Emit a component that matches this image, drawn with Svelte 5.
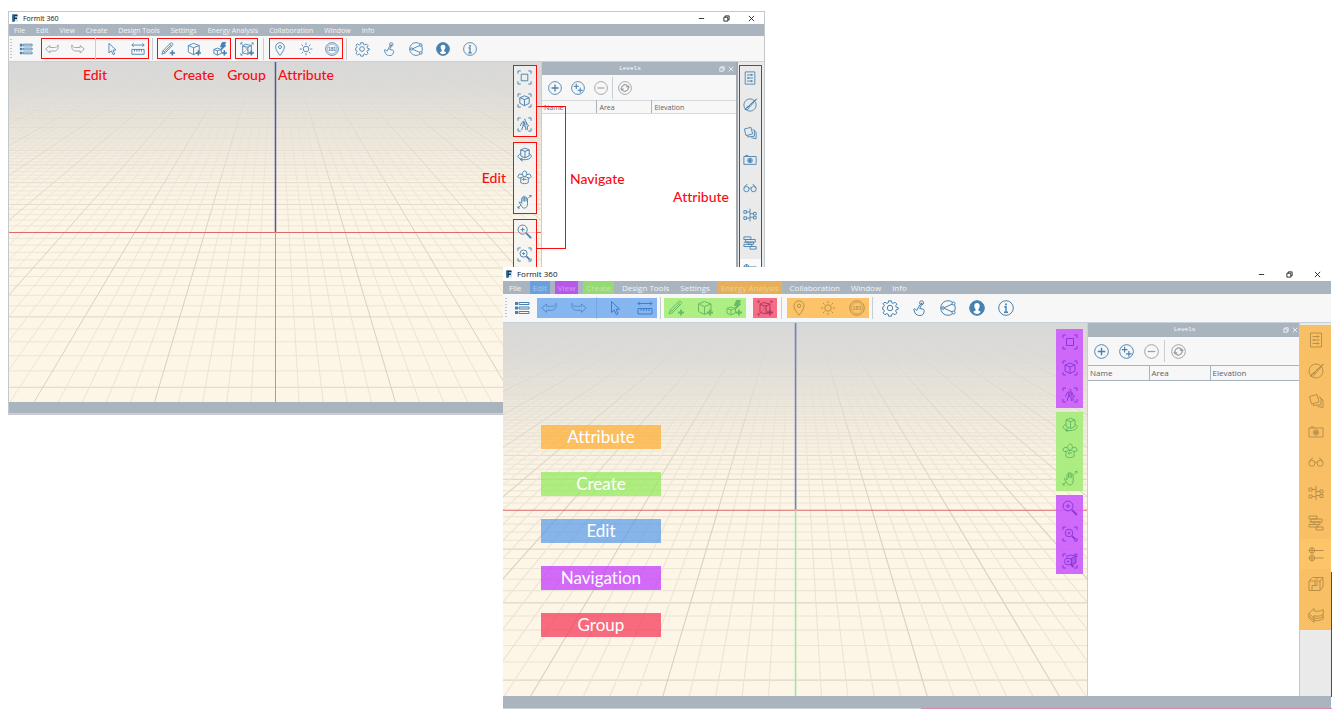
<script>
  const P = (d, extra = '') => `<path d="${d}" ${extra}/>`;
  const corners = P('M1 4V1h3M12 1h3v3M15 12v3h-3M4 15H1v-3');
  const plus = P('M13 9.500v6M10 12.500h6', 'stroke-width="1.800"');
  const hand = 'M5 13 2.500 9.500c-.6-1 .7-1.500 1.300-.7L5 10V4.500c0-1 1.500-1 1.500 0V3c0-1 1.600-1 1.600 0v.8c0-1 1.600-1 1.600 0V5c0-1 1.500-1 1.500 0v5c0 3-1.200 5-3.200 5S5.600 14.300 5 13zM6.500 4.500V8M8.100 3.800V8M9.700 5v3';

  const icons = {
    list: P('M1 3.500h3M1 8h3M1 12.500h3', 'stroke-width="3"') + P('M5 2.500h10v2H5zM5 7h10v2H5zM5 11.500h10v2H5z'),
    undo: P('M.8 8 5.500 4v2.300h5c2.300 0 3.900-.8 4.400-3 .8 3.800-.6 7-4.400 7h-5v2.200z'),
    redo: P('M15.200 8 10.500 4v2.300h-5c-2.300 0-3.900-.8-4.400-3-.8 3.800.6 7 4.400 7h5v2.200z'),
    cursor: P('M4.500 1.500v11l2.800-2.400 2 4.400 1.800-.8-2-4.300 3.400-.3z'),
    measure: P('M1 3.500h14M3 1.500l-2 2 2 2M13 1.500l2 2-2 2M1 8.500h14v5.500H1zM4 8.500v2.500M6.700 8.500v2.500M9.300 8.500v2.500M12 8.500v2.500'),
    pencil: P('M1 14l1.200-4L11 1.200c1-1 3.300 1 2.300 2.300L4.800 12.500zM2.200 10l2.600 2.500M9.800 2.400l2.400 2.400M3.800 11.200 11.200 3.800') + plus,
    cube: P('M1.500 4 7.500 1.500 14 4v7.500L7.500 14.500l-6-3zM1.500 4l6 2.500L14 4M7.500 6.500v8') + plus,
    bolt: P('M1 8.500 5 7l4.500 1.500V13L5 15l-4-2zM1 8.500 5 10l4.500-1.500M5 10v5') + P('M10.500.5h4L12.800 4h2L9 9.500l1.600-4H8.500z', 'fill="currentColor"') + plus,
    group: P('M1 3V1h2M13 1h2v2M3 15H1v-2M3 4.500l3-2 7 1.500v7l-4 3-6-1.500zM3 4.500l6 1.500 4-2M9 6v8') + P('M1 1l12 13M15 1 1 15', 'stroke-width=".5"') + plus,
    pin: P('M8 15.300C5 11.500 3 8.500 3 5.800a5 5 0 0 1 10 0c0 2.700-2 5.700-5 9.500z') + '<circle cx="8" cy="5.800" r="1.700"/>',
    sun: '<circle cx="8" cy="8" r="3.200"/>' + P('M8 .8v2.400M8 12.800v2.400M.8 8h2.400M12.800 8h2.400M3 3l1.600 1.600M11.400 11.400 13 13M13 3l-1.600 1.600M4.600 11.400 3 13'),
    dial: '<circle cx="8" cy="8" r="7.300"/><circle cx="8" cy="8" r="5.600" stroke-width=".6"/><text x="8" y="10" font-size="5.500" font-family="Liberation Sans, sans-serif" font-weight="700" text-anchor="middle" fill="currentColor" stroke="none">181</text>',
    gear: '<circle cx="8" cy="8" r="2.700"/>' + P('M6.600.8h2.800l.4 2 1.400.6 1.800-1.200 1.900 1.900-1.200 1.800.5 1.300 2 .4v1.600l-2 .5-.5 1.400 1.200 1.800-1.900 1.900-1.800-1.200-1.400.6-.4 2H6.600l-.4-2-1.400-.6L3 14.800l-1.900-1.900 1.200-1.800-.6-1.400-1-.3V7.100l1.100-.4.5-1.300-1.200-1.800L3 2.200l1.800 1.200 1.400-.6z'),
    touch: P('M4 13 2.800 9.500c0-1 1.200-1.200 1.700-.3l1.200 1.300 3-5.500c.7-1 1.900-.3 1.400.8L8.700 8.500l3.300.7c1 .2 1.300 1 1.200 2-.2 2.600-1.500 4.300-4.200 4.300-2.300 0-4-.9-5-2.500z') + '<circle cx="10.600" cy="2.800" r="2"/>' + P('M10.600 2.800v1.500', 'stroke-width="1.800"'),
    share: '<circle cx="8" cy="8" r="7.300"/>' + P('M13.500 3.500 3.500 8l10 4.500') + '<circle cx="3" cy="8" r="1.300" fill="#f7f7f7"/><circle cx="13.500" cy="3.500" r="1.500" fill="#f7f7f7"/><circle cx="13.500" cy="12.500" r="1.500" fill="#f7f7f7"/>',
    user: '<circle cx="8" cy="8" r="7.300" fill="currentColor"/>' + P('M8 3c-2 0-2.900 1.500-2.700 3.300.2 1.500.8 2.300 1.300 2.900v1.300l-2.300 1.300C5 13.400 6.500 14 8 14s3-.6 3.700-2.200l-2.300-1.300V9.200c.5-.6 1.100-1.400 1.300-2.900C10.900 4.500 10 3 8 3z', 'fill="#fff" stroke="none"'),
    info: '<circle cx="8" cy="8" r="7.300"/>' + P('M8 3.500v1.800', 'stroke-width="1.800"') + P('M6.300 6.800H8v5.300M6 12.300h4', 'stroke-width="1.400"'),
    frame: corners + P('M4.500 4.500h7v7h-7z'),
    frameCube: corners + P('M3 5 8 3l5 2v6L8 13.500 3 11zM3 5l5 2 5-2M8 7v6.500'),
    walk: corners + P('M7.500 2.500c1.500-.8 2 1 1 1.800l1.500 1.200 1 3 2 1M7 4.500 5 6 3.500 9.500M7 4.500 6.500 9 5 14M6.500 9l2.500 1 .5 4M10 5.500 9.500 9M8.500 4.500 7.500 9.500M11 9.500V14'),
    orbit: P('M4 3 8.500 1.200 13 3v6.500L8.500 11.500 4 9.500zM4 3l4.500 1.700L13 3M8.500 4.700v6.800M4 7c-4 2-4 5 1 5.800M13 7c4 2 2.500 6-4 6.500H4M6 11.500l-2.500 1.800L6 15'),
    look: P('M4 8v5.500c2.500 1.500 6 1.500 8 0V8M4 8.500C2.500 8.800 1.200 8.300.8 7l1.700-2.800L6 5M12 8.500c1.500.3 2.800-.2 3.200-1.500l-1.700-2.800L10 5M5.500 5C5.500 3 6.500 1.500 8 1s2.500 2 2.500 4L8 7.500zM4 8.500c2-1.800 6-1.800 8 0M10 10H6M7.500 8.500 6 10l1.500 1.500'),
    pan: P(hand) + P('M12 4.500 15 1.500M13 1.500h2v2M4 12l-3 3M1 13v2h2'),
    zoom: '<circle cx="6" cy="6" r="4.900"/>' + P('M6 3.800v4.400M3.800 6h4.400') + P('M9.800 9.800 15 15', 'stroke-width="1.900"'),
    zoomFrame: corners + '<circle cx="7" cy="7" r="3.800"/>' + P('M7 5.600v2.800M5.600 7h2.800') + P('m10 10 3.500 3.500', 'stroke-width="1.800"'),
    zoomCube: corners + P('M9.500 5 14 3v7l-4.500 2z', 'fill="currentColor" fill-opacity=".5"') + P('M4 3.500 9 2l5 1') + '<circle cx="6" cy="8.500" r="3.500"/>' + P('M6 7.300v2.400M4.800 8.500h2.400') + P('m8.500 11 3 3', 'stroke-width="1.800"'),
    sliders: P('M2.500 1h11v14h-11zM4.500 4.500h7M4.500 8h7M4.500 11.500h7M9.500 3.300v2.400M6 6.800v2.400M9.500 10.300v2.400'),
    brush: '<circle cx="8" cy="8" r="7"/>' + P('M15.500 1 8 7.500 6 10.500l2.500-1zM6 9.500c-2 0-2 2.500-4 3.500 3 .8 5-.5 5-2.300M13 3.300 3 12.800'),
    layers: P('M1.500 3.500 9 1.500l2 7.500-7.500 2zM11 4l2 .7 0 7-7.500.8v-1.500M13 6l2 1v7.500l-5.500-1'),
    camera: P('M1 4h14v9H1zM3 4V2.800h2.500V4') + '<circle cx="8" cy="8.500" r="2.700"/><circle cx="8" cy="8.500" r="1.500" fill="currentColor"/>',
    glasses: P('M1 8 3.500 4.500 5 4M15 8l-2.500-3.500L11 4M6.800 8.500c.7-.6 1.700-.6 2.400 0') + '<circle cx="3.900" cy="9.300" r="3"/><circle cx="12.100" cy="9.300" r="3"/>',
    tree: P('M8 .8v14.400M4 4.500h4M4 11.500h4M8 6.500h4M8 10.500h4M1 3h3v3H1zM1 10h3v3H1zM12 5h3v3h-3zM12 9.500h3v3h-3z'),
    bricks: P('M1 1h8v3H1zM3 4h11v3H3zM6 7h6v2.500H6zM1 9.500h9V12H1zM8 12h7v3H8zM1 7h5'),
    datum: '<circle cx="4" cy="4.500" r="2.700"/><circle cx="4" cy="12" r="2.700"/>' + P('M.5 4.500h15M.5 12h15M4 1v7M4 8.500v7'),
    section: P('M1 5 4.500 1.500h10.500V11L12 14.500H1zM1 5h6v4.500H4v5M7 5l3-3.500M12 14.500V5M12 5l3-3.500M9 5h3M9 5v4.500H7'),
    stack: P('M.8 6.500 6 1.500v2.300c3 1 6 .6 9.200-1.300v5C12 9.300 9 9.600 6 8.700V11zM.8 6.500v2.300L6 13.300V11M.8 8.800V11L6 15.500v-2.200M6 11c3 .8 6 .4 9.200-1.500V7.500M6 13.300c3 .8 6 .4 9.200-1.500V9.500'),
    add: '<circle cx="8" cy="8" r="7.300"/>' + P('M8 4v8M4 8h8', 'stroke-width="1.500"'),
    addMany: '<circle cx="8" cy="8" r="7.300"/>' + P('M6 3v6M3 6h6M10.500 7.500v6M7.500 10.500h6', 'stroke-width="1.200"'),
    remove: '<circle cx="8" cy="8" r="7.300"/>' + P('M4 8h8', 'stroke-width="1.300"'),
    refresh: '<circle cx="8" cy="8" r="7.300"/>' + P('M4.600 10A4 4 0 0 1 10.500 5M11.400 6A4 4 0 0 1 5.500 11M3 8.500l1.500 2 2-1.300M13 7.500l-1.500-2-2 1.300', 'stroke-width="1.300"'),
    min: P('M2 8h12', 'stroke-width="1.900"'),
    restore: P('M2 5h9v9H2zM5 5V2h9v9H11', 'stroke-width="1.900"'),
    close: P('M2 2l12 12M14 2 2 14', 'stroke-width="1.900"')
  };

  const menu = [
    ['File', ''], ['Edit', 'edit'], ['View', 'nav'], ['Create', 'create'], ['Design Tools', ''],
    ['Settings', ''], ['Energy Analysis', 'attr'], ['Collaboration', ''], ['Window', ''], ['Info', '']
  ];
  const tools = [
    { kind: 'edit', label: 'Edit', items: ['undo', 'redo', '|', 'cursor', 'measure'] },
    { kind: 'create', label: 'Create', rule: true, items: ['pencil', 'cube', 'bolt'] },
    { kind: 'group', label: 'Group', items: ['group'] },
    { kind: 'attr', label: 'Attribute', rule: true, items: ['pin', 'sun', 'dial'] }
  ];
  const extras = ['gear', 'touch', 'share', 'user', 'info'];
  const navGroups = [
    { kind: 'nav', items: ['frame', 'frameCube', 'walk'] },
    { kind: 'create', items: ['orbit', 'look', 'pan'] },
    { kind: 'nav', items: ['zoom', 'zoomFrame', 'zoomCube'] }
  ];
  const rail = ['sliders', 'brush', 'layers', 'camera', 'glasses', 'tree', 'bricks', 'datum', 'section', 'stack'];
  const legend = [['Attribute', 'attr'], ['Create', 'create'], ['Edit', 'edit'], ['Navigation', 'nav'], ['Group', 'group']];

  // Ground plane in one-point perspective: horizon above the view, origin at (266, 170).
  const horizon = -66;
  const depth = 37.8;
  const rows = [];
  for (let i = -90; i <= 17; i++) {
    if (i === 0) continue;
    rows.push({ y: horizon + (236 * depth) / (depth - i), major: i % 5 === 0 });
  }
  const cols = [];
  for (let i = -100; i <= 100; i++) {
    if (i === 0) continue;
    cols.push({ a: 266 + i * 14 * (66 / 236), b: 266 + i * 14 * (406 / 236), major: i % 5 === 0 });
  }
</script>

{#snippet icon(name)}
  <svg class="icon" viewBox="0 0 16 16" aria-hidden="true">{@html icons[name]}</svg>
{/snippet}

{#snippet tool(name)}
  <button class="tool" class:muted={name === 'undo' || name === 'redo'} aria-label={name}>{@render icon(name)}</button>
{/snippet}

{#snippet appWindow(front)}
  <section class="window" class:front class:back={!front}>
    <header class="title">
      <svg class="logo" viewBox="0 0 16 16" aria-hidden="true">
        <path d="M2 1h12v14H2z" fill="#c5e3f5" />
        <path d="M3 1h10v3.500H7.500V7H12v3H7.500v5H3z" fill="#0b3558" />
        <path d="M3 1h3v14H3z" fill="#1668a0" />
      </svg>
      <span>FormIt 360</span>
      <div class="controls">
        {#each ['min', 'restore', 'close'] as c}<button aria-label={c}>{@render icon(c)}</button>{/each}
      </div>
    </header>

    <nav class="menu">
      {#each menu as [text, kind]}<button class={['item', front && kind && `tint ${kind}`]}>{text}</button>{/each}
    </nav>

    <div class="toolbar">
      <span class="grip"></span>
      <div class="lead">{@render tool('list')}</div>
      {#each tools as g}
        {#if g.rule}<span class="rule"></span>{/if}
        <div class={['set', g.kind, front ? 'tint' : 'outlined']}>
          {#each g.items as name}
            {#if name === '|'}<span class="rule inner"></span>{:else}{@render tool(name)}{/if}
          {/each}
          {#if !front}<span class="note below">{g.label}</span>{/if}
        </div>
      {/each}
      <span class="rule"></span>
      <div class="extras">{#each extras as name}{@render tool(name)}{/each}</div>
    </div>

    <div class="body">
      <div class="view">
        <svg class="ground" viewBox="0 0 532 340" preserveAspectRatio="xMidYMin slice" aria-hidden="true">
          <defs>
            <linearGradient id={front ? 'hazeFront' : 'hazeBack'} x1="0" y1="0" x2="0" y2="1">
              <stop offset="0" stop-color="#d8d8d8" />
              <stop offset=".08" stop-color="#dbdad7" stop-opacity=".9" />
              <stop offset=".25" stop-color="#e6e1d8" stop-opacity=".5" />
              <stop offset=".5" stop-color="#fdf5e4" stop-opacity="0" />
            </linearGradient>
          </defs>
          <rect width="532" height="340" fill="#fdf5e5" />
          {#each rows as r}<line x1="0" x2="532" y1={r.y} y2={r.y} stroke={r.major ? '#ddd6c8' : '#ece6d8'} />{/each}
          {#each cols as c}<line x1={c.a} x2={c.b} y1="0" y2="340" stroke={c.major ? '#d8d1c3' : '#ebe4d6'} />{/each}
          <rect width="532" height="340" fill={front ? 'url(#hazeFront)' : 'url(#hazeBack)'} />
          <line x1="0" x2="532" y1="170.500" y2="170.500" stroke="#df6a6a" />
          <line x1="266.500" x2="266.500" y1="170" y2="340" stroke={front ? '#a9e2b0' : '#62c878'} stroke-width={front ? 1.5 : 1} />
          <line x1="266.500" x2="266.500" y1="0" y2="170" stroke={front ? '#7483b5' : '#5055a5'} stroke-width="1.500" />
        </svg>
        {#if front}
          <ul class="legend">
            {#each legend as [text, kind]}<li class="tint {kind}"><span>{text}</span></li>{/each}
          </ul>
        {/if}
        <div class="navbar">
          {#each navGroups as g}
            <div class={['navset', g.kind, front ? 'tint' : 'outlined']}>
              {#each g.items as name}{@render tool(name)}{/each}
              {#if !front && g.kind === 'create'}<span class="note before">Edit</span>{/if}
            </div>
          {/each}
          {#if !front}<div class="bracket"><span class="note after">Navigate</span></div>{/if}
        </div>
      </div>

      <aside class="levels">
        <div class="caption">
          <span>Levels</span>
          <button aria-label="float">{@render icon('restore')}</button>
          <button aria-label="hide">{@render icon('close')}</button>
        </div>
        <div class="actions">
          <button aria-label="add level">{@render icon('add')}</button>
          <button aria-label="add levels">{@render icon('addMany')}</button>
          <button class="muted" aria-label="remove level">{@render icon('remove')}</button>
          <span class="rule"></span>
          <button class="muted" aria-label="refresh">{@render icon('refresh')}</button>
        </div>
        <table>
          <thead><tr><th>Name</th><th>Area</th><th>Elevation</th></tr></thead>
        </table>
      </aside>

      <div class="rail">
        <div class={['railset', front ? 'tint attr' : 'outlined']}>
          {#each rail as name}
            <div class="slot" class:lit={name === 'datum'}>{@render tool(name)}</div>
          {/each}
          {#if !front}<span class="note aside">Attribute</span>{/if}
        </div>
      </div>
    </div>
    <footer class="status"></footer>
  </section>
{/snippet}

<main class="desk">
  {@render appWindow(false)}
  {@render appWindow(true)}
</main>

<style>
  :global(body) { background: #fff; }
  .desk { position: relative; min-height: 100vh; overflow: hidden; }
  button {
    display: flex; align-items: center; justify-content: center;
    margin: 0; padding: 0; border: 0; background: none; color: inherit; font: inherit; cursor: pointer;
  }
  .window {
    --text: 7px; --title: 12px; --menu: 12px; --bar: 26px; --view: 340px;
    --icon: 14px; --cell: 22px; --panel: 197px; --rail: 26px;
    position: absolute; top: 11px; left: 8px; width: 56.83%; box-sizing: border-box; isolation: isolate;
    border: 1px solid #c3c8cb; background: #fff; color: #4681b0;
    font: var(--text)/1 "Open Sans", sans-serif;
  }
  .front {
    --text: 8px; --title: 14px; --menu: 13px; --bar: 29px; --view: 373px;
    --icon: 16px; --cell: 24px; --panel: 213px; --rail: 31px;
    top: 267px; left: 37.76%; right: 1px; width: auto; border: 0;
  }
  .front::before, .front::after { content: ""; position: absolute; right: -1px; z-index: 3; }
  .front::before { width: 1px; height: 125px; bottom: 12px; background: #8d2f4b; }
  .front::after { width: 411px; height: 1px; bottom: 0; background: #d98aae; }
  .icon { display: block; width: var(--icon); height: var(--icon); fill: none; stroke: currentColor; stroke-width: 1; overflow: visible; }
  .muted { color: #9c9fa2; }

  .title { display: flex; align-items: center; gap: 4px; height: var(--title); padding-left: 2px; color: #111; }
  .logo { width: 8px; height: 8px; }
  .controls { display: flex; margin-left: auto; }
  .controls button { width: 25px; }
  .front .controls button { width: 28px; }
  .controls .icon { width: 7px; height: 7px; }

  .menu { display: flex; align-items: stretch; gap: 5px; height: var(--menu); padding-left: 2px; background: #aab4bf; color: #fff; }
  .item { position: relative; padding: 0 3px; color: #f3f5f7; }
  .item.tint { color: rgba(255, 255, 255, .4); isolation: isolate; }
  .item.tint::after { z-index: -1; }
  .front .menu { padding-left: 3px; }

  .toolbar { display: flex; align-items: center; height: var(--bar); background: #f7f7f7; border-bottom: 1px solid #c6d2da; box-sizing: border-box; }
  .tool { width: var(--cell); height: var(--cell); flex: none; }
  .grip { width: 2px; height: 20px; margin: 0 3px 0 1px; background: repeating-linear-gradient(#c4c4c4 0 1px, transparent 1px 3px); }
  .front .grip { margin-left: 2px; }
  .lead { margin-right: 4px; }
  .front .lead { margin-right: 3px; }
  .set { position: relative; display: flex; align-items: center; justify-content: space-between; height: 21px; box-sizing: border-box; }
  .front .set, .front .set .tool { height: 20px; }
  .back .set .tool { margin: 0 -1px; }
  .set.edit { width: 108px; }
  .set.create, .set.attr { width: 74px; }
  .set.group { width: 23px; justify-content: center; }
  .front .set.edit { width: 120px; }
  .front .set.create, .front .set.attr { width: 82px; }
  .front .set.group { width: 24px; }
  .rule { width: 1px; height: 22px; margin: 0 4px 0 3px; background: #c9ced3; flex: none; }
  .front .toolbar > .rule { margin-right: 3px; }
  .rule.inner { margin: 0; }
  .set.create { margin-right: 4px; }
  .set.group + .rule { margin: 0 5px; }
  .front .set.create { margin-right: 7px; }
  .front .toolbar > .set.group + .rule { margin: 0 5px 0 4px; }
  .front .toolbar > .set.attr + .rule { margin: 0 5px 0 3px; }
  .extras { display: flex; gap: 5px; }

  .outlined { border: 1px solid #ff0a0a; }
  .note { position: absolute; color: #fb0a12; font: 500 14px/16px Lato, sans-serif; font-variant-ligatures: none; white-space: nowrap; z-index: 4; }
  .below { top: 28px; left: 50%; transform: translateX(-50%); }
  .before { right: 100%; top: 27px; margin-right: 8px; }
  .after { left: 100%; top: 64px; margin-left: 5px; }
  .aside { right: 100%; top: 123px; margin-right: 11px; }

  .tint { --hue: transparent; position: relative; color: #144f86; }
  .tint .muted { color: #6f7f90; }
  .tint::after { content: ""; position: absolute; inset: 0; background: var(--hue); pointer-events: none; }
  .tint.edit { --hue: rgba(78, 150, 234, .68); }
  .tint.create { --hue: rgba(141, 234, 84, .7); }
  .tint.nav { --hue: rgba(191, 47, 255, .7); }
  .tint.attr { --hue: rgba(255, 173, 44, .7); }
  .tint.group { --hue: rgba(245, 48, 82, .7); }

  .body { display: flex; height: var(--view); }
  .view { position: relative; flex: 1; min-width: 0; }
  .ground { position: absolute; inset: 0; width: 100%; height: 100%; }
  .navbar { position: absolute; top: 3px; right: 4px; display: flex; flex-direction: column; gap: 5px; z-index: 2; }
  .front .navbar { top: 6px; gap: 4px; }
  .navset { position: relative; width: 24px; height: 72px; box-sizing: border-box; display: flex; flex-direction: column; align-items: center; justify-content: space-around; background: rgba(247, 247, 247, .7); }
  .back .navset .icon { width: 15px; height: 15px; }
  .front .navset { width: 27px; height: 79px; }
  .bracket { position: absolute; left: 100%; top: 41px; width: 29px; height: 143px; box-sizing: border-box; border: 1px solid #ff0a0a; border-left: 0; }

  .legend { position: absolute; top: 102px; left: 38px; margin: 0; padding: 0; list-style: none; display: flex; flex-direction: column; gap: 23px; }
  .legend li { width: 120px; height: 24px; display: flex; align-items: center; justify-content: center; }
  .legend span { position: relative; z-index: 1; color: #fff; font: 17px/24px Lato, sans-serif; font-variant-ligatures: none; }

  .levels { width: var(--panel); box-sizing: border-box; background: #fff; border-left: 1px solid #c8ced4; border-right: 2px solid #a3a9ae; }
  .front .levels { border-right: 1px solid #c3c8cc; }
  .caption { display: flex; align-items: center; height: 13px; background: #aab4bf; color: #fff; }
  .front .caption { height: 14px; }
  .caption span { flex: 1; text-align: center; font: 6px/8px "Liberation Mono", monospace; }
  .caption button { width: 9px; }
  .caption .icon { width: 6px; height: 6px; stroke-width: 2; }
  .actions { display: flex; align-items: center; gap: 9px; height: 25px; padding-left: 6px; background: #f7f7f7; }
  .front .actions { height: 28px; gap: 10px; padding-left: 6px; }
  .actions .rule { margin: 0 -4px 0 -5px; }
  .front .actions .icon { width: 15px; height: 15px; }
  table { width: 100%; border-collapse: collapse; table-layout: fixed; background: #f7f7f7; }
  th { height: 13px; padding: 0 0 0 2px; box-sizing: border-box; text-align: left; font-weight: 400; color: #5c6166; border: 1px solid #d5dade; border-right-color: #a9b3bd; border-left: 0; }
  th:last-child { border-right: 0; }
  th:nth-child(1), th:nth-child(2) { width: 55px; }
  .front th { height: 15px; border-color: #a9b3bd; }
  .front th:nth-child(1), .front th:nth-child(2) { width: 61px; }

  .rail { width: var(--rail); background: #eaeaea; }
  .railset { position: relative; box-sizing: border-box; display: flex; flex-direction: column; }
  .back .railset { width: 23px; margin: 3px 0 0 1px; height: 277px; }
  .back .railset .tool { margin-top: -4px; }
  .front .railset { margin-top: 2px; height: 305px; }
  .slot { flex: 1; display: flex; align-items: center; justify-content: center; }
  .slot.lit { background: #fafafa; }
  .status { height: 12px; background: #aab4bf; border-bottom: 1px solid #cbd2d8; box-sizing: border-box; }
  .front .status { height: 13px; }
</style>
